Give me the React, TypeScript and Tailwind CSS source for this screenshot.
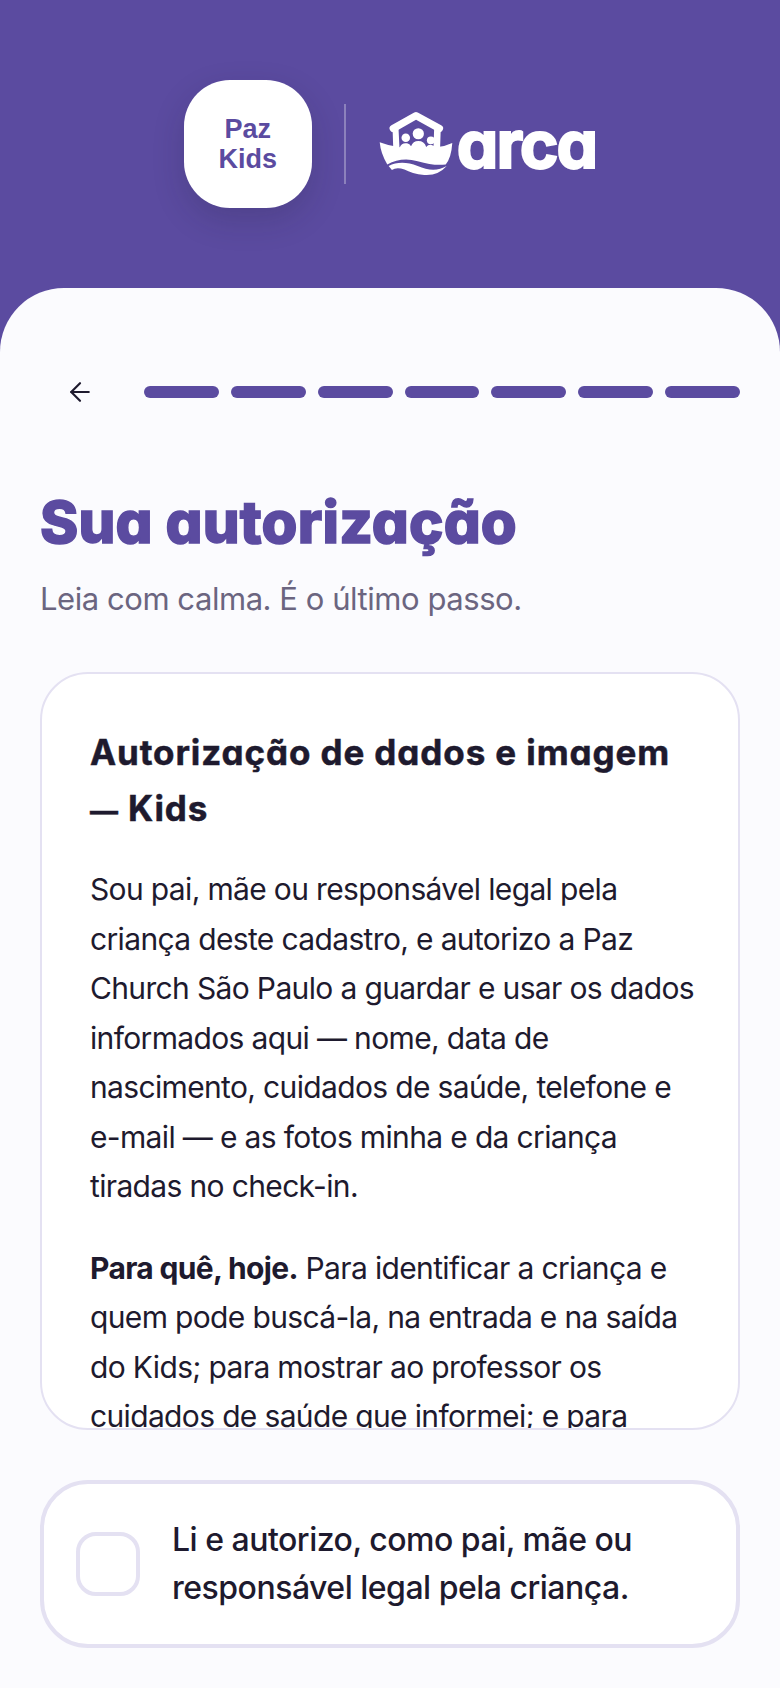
import React from 'react';
import { ArrowLeft } from 'lucide-react';

const steps = [1, 2, 3, 4, 5, 6, 7];

const ArcaLogo = () => (
  <div className="flex items-end h-[64px]">
    <svg width="76" height="66" viewBox="680 180 230 200" className="shrink-0" aria-hidden="true">
      <path d="M726 236 L795 197 L866 236" fill="none" stroke="#fff" strokeWidth="22" strokeLinecap="round" strokeLinejoin="round" />
      <path d="M724 236 H742 L745 296 H726 Z M850 236 H870 L868 296 H848 Z" fill="#fff" />
      <circle cx="802" cy="252" r="17" fill="#fff" />
      <circle cx="764" cy="264" r="13" fill="#fff" />
      <circle cx="840" cy="272" r="12" fill="#fff" />
      <path d="M685 278 Q715 290 746 293 Q752 278 768 281 Q776 283 780 290 Q786 274 802 274 Q820 274 826 292 Q832 284 842 286 Q852 288 856 293 Q882 291 905 280 Q902 325 885 345 Q850 350 800 335 Q750 322 708 345 Q688 312 685 278 Z" fill="#fff" />
      <path d="M712 350 Q750 330 800 350 Q850 372 888 350 Q862 380 820 377 Q782 372 760 360 Q735 352 722 362 Z" fill="#fff" />
    </svg>
    <span className="ml-[3px] font-['Inter',sans-serif] font-bold text-[66px] leading-[64px] tracking-[-2px] text-white [font-feature-settings:'cv11'] [-webkit-text-stroke:2px_#fff]">
      arca
    </span>
  </div>
);

const App = () => {
  return (
    <div className="h-[1688px] w-full overflow-hidden flex flex-col bg-[#5b4ba0] font-['Inter',sans-serif]">
      <header className="h-[288px] shrink-0 flex items-center justify-center gap-8">
        <div className="w-[128px] h-[128px] rounded-[46px] bg-white shadow-[0_12px_32px_rgba(30,26,46,0.18)] flex items-center justify-center">
          <span className="font-['Liberation_Sans',sans-serif] font-bold text-[27px] leading-[30px] text-center text-[#5b4ba0]">
            Paz
            <br />
            Kids
          </span>
        </div>
        <div className="w-[2px] h-[80px] bg-white/30" />
        <ArcaLogo />
      </header>

      <main className="flex-1 min-h-0 rounded-t-[64px] bg-[#fbfbfe] px-10 pt-[72px] pb-10 flex flex-col">
        <div className="flex items-center gap-6 h-[64px]">
          <button className="w-[80px] h-[64px] flex items-center justify-center text-[#1e1a2e]" aria-label="Voltar">
            <ArrowLeft size={30} strokeWidth={1.75} />
          </button>
          <div className="flex-1 flex gap-3">
            {steps.map((step) => (
              <div key={step} className="flex-1 h-3 rounded-full bg-[#5b4ba0]" />
            ))}
          </div>
        </div>

        <h1 className="mt-[60px] font-['Inter',sans-serif] font-extrabold text-[58px] leading-[76px] tracking-[0.2px] text-[#5b4ba0] [font-feature-settings:'cv11'] [-webkit-text-stroke:1.5px_#5b4ba0]">
          Sua autorização
        </h1>
        <p className="mt-[15px] text-[31px] leading-[48px] tracking-[-0.45px] text-[#6b6580]">Leia com calma. É o último passo.</p>

        <section className="mt-[49px] h-[758px] overflow-hidden rounded-[48px] border-2 border-[#e4e1f2] bg-white pl-12 pr-10 pt-[50px] text-[#1e1a2e]">
          <h2 className="font-['Inter',sans-serif] font-bold text-[35px] leading-[56px] tracking-[0.9px] [font-feature-settings:'cv11'] [-webkit-text-stroke:0.5px_#1e1a2e]">
            Autorização de dados e imagem <span className="text-[28px] leading-none">—</span> Kids
          </h2>
          <p className="mt-[29px] text-[30px] leading-[49.5px] tracking-[-0.65px]">
            Sou pai, mãe ou responsável legal pela criança deste cadastro, e autorizo a Paz Church São Paulo a guardar e usar os dados informados aqui — nome, data de nascimento, cuidados de saúde, telefone e e-mail — e as fotos minha e da criança tiradas no check-in.
          </p>
          <p className="mt-[32px] text-[30px] leading-[49.5px] tracking-[-0.65px]">
            <strong className="font-bold">Para quê, hoje.</strong> Para identificar a criança e quem pode buscá-la, na entrada e na saída do Kids; para mostrar ao professor os cuidados de saúde que informei; e para
          </p>
        </section>

        <label className="mt-[50px] h-[168px] shrink-0 rounded-[48px] border-4 border-[#e4e1f2] bg-white pl-8 pr-8 flex items-center gap-8">
          <span className="w-[64px] h-[64px] shrink-0 rounded-[20px] border-4 border-[#e4e1f2]" />
          <span className="text-[32px] leading-[48px] font-[450] tracking-[-0.5px] text-[#1e1a2e]">
            Li e autorizo, como pai, mãe ou responsável legal pela criança.
          </span>
        </label>
      </main>
    </div>
  );
};

export default App;
